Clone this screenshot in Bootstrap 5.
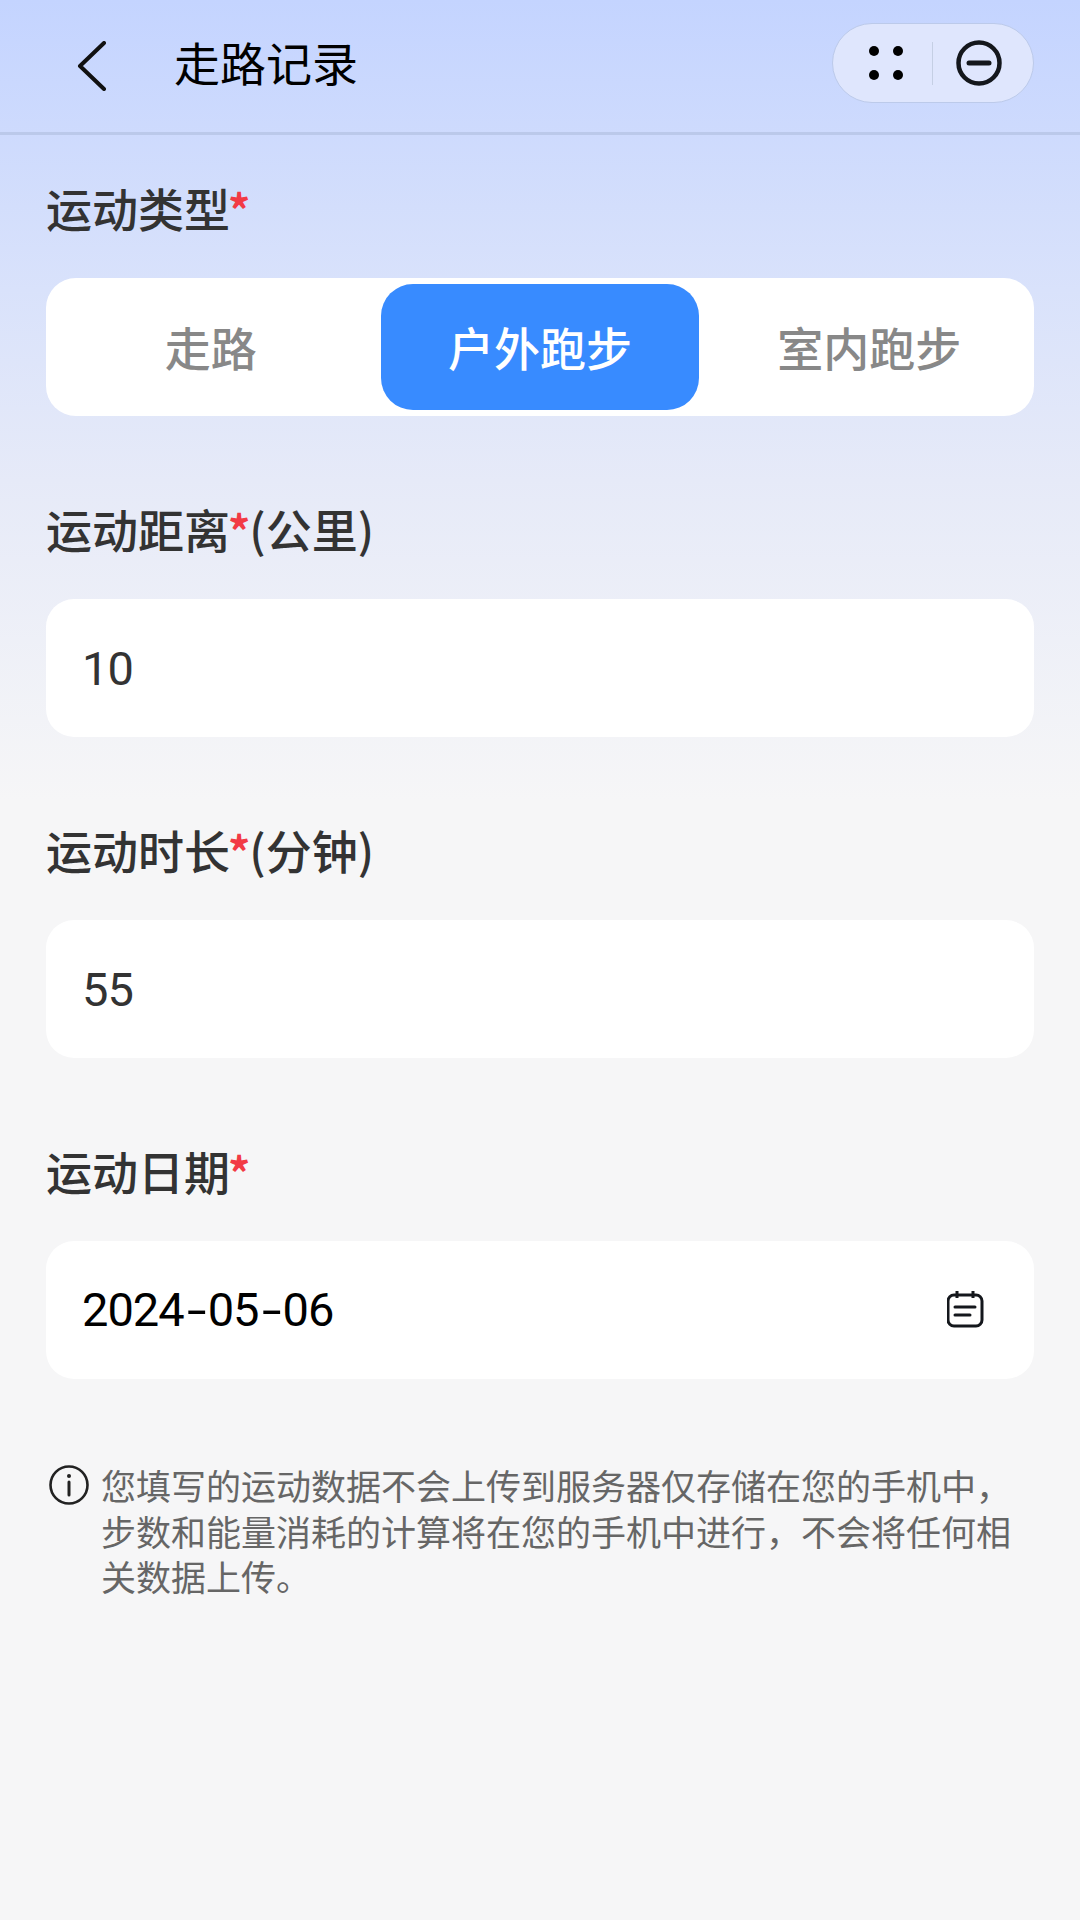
<!DOCTYPE html>
<html lang="zh-CN">
  <head>
    <meta charset="UTF-8" />
    <meta name="viewport" content="width=device-width, initial-scale=1.0" />
    <title>走路记录</title>
    <link
      href="https://cdn.jsdelivr.net/npm/bootstrap@5.3.0/dist/css/bootstrap.min.css"
      rel="stylesheet"
    />
    <style>
      html,
      body {
        height: 100%;
      }
      body {
        font-family: "Noto Sans CJK SC", sans-serif;
        background: linear-gradient(#c4d4ff 0, #d9e2fb 290px, #e6eaf8 480px, #f6f6f7 800px, #f6f6f7 100%);
        min-height: 1920px;
      }
      .top-bar {
        height: 135px;
        border-bottom: 3px solid #bbc9ea;
        padding-left: 75px;
        padding-right: 46px;
      }
      .page-title {
        font-size: 46px;
        line-height: 60px;
        color: #000;
        margin-left: 67px;
        padding-bottom: 10px;
        font-weight: 400;
      }
      .capsule {
        width: 202px;
        height: 80px;
        margin-top: -6px;
        margin-left: auto;
        padding-left: 36px;
        border-radius: 40px;
        background: #dfe6fd;
        border: 1px solid #bccaea;
      }
      .capsule-line {
        width: 1px;
        height: 43px;
        background: #c5cfe4;
        margin-left: 29px;
        margin-right: 23px;
      }
      .form-area {
        padding: 42px 46px 0;
      }
      .field-label {
        font-size: 46px;
        line-height: 60px;
        font-weight: 500;
        color: #333;
        margin-bottom: 41px;
        display: block;
      }
      .field-label b {
        color: #f23a45;
        font-weight: 700;
        font-size: 44px;
        line-height: 0;
        margin-left: -2px;
        margin-right: -1px;
      }
      .field-gap {
        margin-bottom: 82px;
      }
      .seg-box {
        height: 138px;
        padding: 6px;
        gap: 12px;
        border-radius: 30px;
        background: #fff;
      }
      .seg-btn {
        flex: 1 1 0;
        border: 0;
        padding: 0 0 2px;
        font-size: 46px;
        font-weight: 500;
        color: #888;
        border-radius: 32px;
      }
      .seg-btn.active,
      .seg-btn:hover {
        background: #388bff;
        color: #fff;
      }
      .num-input,
      .num-input:focus,
      .date-group .input-group-text {
        height: 138px;
        border: 0;
        border-radius: 28px;
        background: #fff;
        box-shadow: none;
      }
      .num-input {
        padding: 0 36px;
        font-family: Roboto, sans-serif;
        font-size: 47px;
        letter-spacing: -1px;
        color: #333;
      }
      .date-text {
        color: #000;
        display: flex;
        align-items: center;
      }
      .date-dash {
        display: inline-block;
        width: 24px;
        text-align: center;
        transform: scaleX(1.5);
      }
      .date-group .input-group-text {
        padding: 0 50px 3px 0;
      }
      .hint-row {
        margin-top: 83px;
        gap: 12px;
        padding-left: 3px;
      }
      .hint-text {
        font-size: 35px;
        line-height: 45.5px;
        color: #666;
        margin: 0;
      }
      .hint-icon {
        margin-top: 3px;
      }
    </style>
  </head>
  <body>
    <header class="top-bar d-flex align-items-center">
      <a href="#" class="d-flex back-link" aria-label="返回">
        <svg width="32" height="50" viewBox="0 0 32 50">
          <path d="M29 2 5 25l24 23" fill="none" stroke="#111" stroke-width="4" stroke-linecap="round" stroke-linejoin="round" />
        </svg>
      </a>
      <h1 class="page-title mb-0">走路记录</h1>
      <div class="capsule d-flex align-items-center">
        <svg width="34" height="34" viewBox="0 0 34 34">
          <circle cx="5" cy="5" r="5" fill="#000" />
          <circle cx="29" cy="5" r="5" fill="#000" />
          <circle cx="5" cy="29" r="5" fill="#000" />
          <circle cx="29" cy="29" r="5" fill="#000" />
        </svg>
        <span class="capsule-line"></span>
        <svg width="46" height="46" viewBox="0 0 46 46">
          <circle cx="23" cy="23" r="20.5" fill="none" stroke="#14171c" stroke-width="4.5" />
          <path d="M13 23h20" stroke="#14171c" stroke-width="5" stroke-linecap="round" />
        </svg>
      </div>
    </header>

    <form class="form-area">
      <div class="field-gap">
        <span class="field-label">运动类型<b>*</b></span>
        <div class="seg-box d-flex">
          <button type="button" class="seg-btn btn">走路</button>
          <button type="button" class="seg-btn btn active">户外跑步</button>
          <button type="button" class="seg-btn btn">室内跑步</button>
        </div>
      </div>

      <div class="field-gap">
        <label class="field-label" for="distance">运动距离<b>*</b>(公里)</label>
        <input type="text" class="form-control num-input" id="distance" value="10" />
      </div>

      <div class="field-gap">
        <label class="field-label" for="duration">运动时长<b>*</b>(分钟)</label>
        <input type="text" class="form-control num-input" id="duration" value="55" />
      </div>

      <div>
        <span class="field-label">运动日期<b>*</b></span>
        <div class="input-group date-group">
          <div class="form-control num-input date-text">2024<span class="date-dash">-</span>05<span class="date-dash">-</span>06</div>
          <span class="input-group-text">
            <svg width="38" height="38" viewBox="0 0 38 38">
              <rect x="2" y="5" width="34" height="31" rx="6" fill="none" stroke="#14171c" stroke-width="3" />
              <path d="M11 1v7M27 1v7" stroke="#14171c" stroke-width="3" />
              <path d="M9 17h20M9 25h15" stroke="#14171c" stroke-width="3" stroke-linecap="round" />
            </svg>
          </span>
        </div>
      </div>

      <div class="hint-row d-flex align-items-start">
        <svg class="hint-icon flex-shrink-0" width="40" height="40" viewBox="0 0 40 40">
          <circle cx="20" cy="20" r="18.5" fill="none" stroke="#222" stroke-width="2.6" />
          <circle cx="20" cy="11" r="2" fill="#222" />
          <path d="M20 17v13" stroke="#222" stroke-width="3" stroke-linecap="round" />
        </svg>
        <p class="hint-text">您填写的运动数据不会上传到服务器仅存储在您的手机中，步数和能量消耗的计算将在您的手机中进行，不会将任何相关数据上传。</p>
      </div>
    </form>

    <script src="https://cdn.jsdelivr.net/npm/bootstrap@5.3.0/dist/js/bootstrap.bundle.min.js"></script>
  </body>
</html>
